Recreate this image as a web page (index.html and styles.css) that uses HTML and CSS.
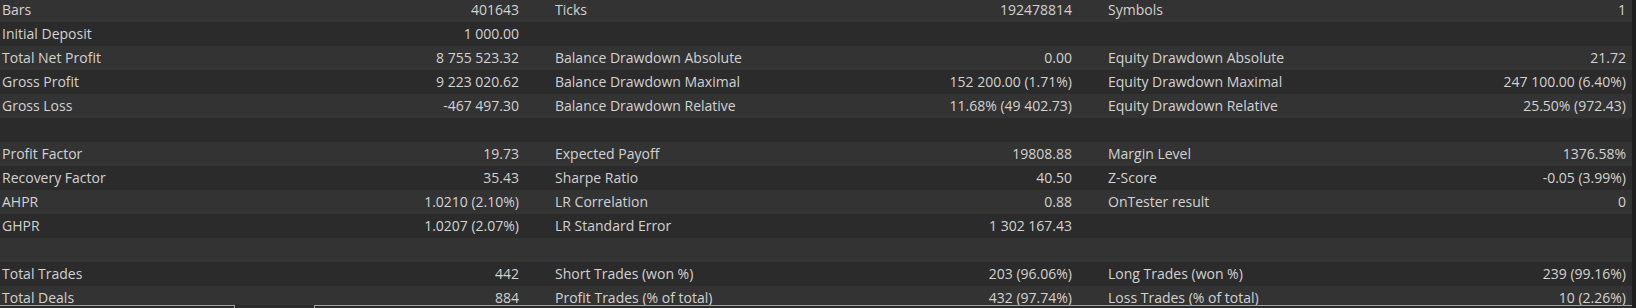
FILE: index.html
```html
<!DOCTYPE html>
<html>
<head>
<meta charset="utf-8">
<link rel="stylesheet" href="styles.css">
</head>
<body>
<div class="window">
  <div class="main">
    <div class="panel">
      <div class="report">
        <div class="row"><div class="cell"><span>Bars</span><span>401643</span></div><div class="cell"><span>Ticks</span><span>192478814</span></div><div class="cell"><span>Symbols</span><span>1</span></div></div>
        <div class="row"><div class="cell"><span>Initial Deposit</span><span>1 000.00</span></div><div class="cell"></div><div class="cell"></div></div>
        <div class="row"><div class="cell"><span>Total Net Profit</span><span>8 755 523.32</span></div><div class="cell"><span>Balance Drawdown Absolute</span><span>0.00</span></div><div class="cell"><span>Equity Drawdown Absolute</span><span>21.72</span></div></div>
        <div class="row"><div class="cell"><span>Gross Profit</span><span>9 223 020.62</span></div><div class="cell"><span>Balance Drawdown Maximal</span><span>152 200.00 (1.71%)</span></div><div class="cell"><span>Equity Drawdown Maximal</span><span>247 100.00 (6.40%)</span></div></div>
        <div class="row"><div class="cell"><span>Gross Loss</span><span>-467 497.30</span></div><div class="cell"><span>Balance Drawdown Relative</span><span>11.68% (49 402.73)</span></div><div class="cell"><span>Equity Drawdown Relative</span><span>25.50% (972.43)</span></div></div>
        <div class="row"><div class="cell"></div><div class="cell"></div><div class="cell"></div></div>
        <div class="row"><div class="cell"><span>Profit Factor</span><span>19.73</span></div><div class="cell"><span>Expected Payoff</span><span>19808.88</span></div><div class="cell"><span>Margin Level</span><span>1376.58%</span></div></div>
        <div class="row"><div class="cell"><span>Recovery Factor</span><span>35.43</span></div><div class="cell"><span>Sharpe Ratio</span><span>40.50</span></div><div class="cell"><span>Z-Score</span><span>-0.05 (3.99%)</span></div></div>
        <div class="row"><div class="cell"><span>AHPR</span><span>1.0210 (2.10%)</span></div><div class="cell"><span>LR Correlation</span><span>0.88</span></div><div class="cell"><span>OnTester result</span><span>0</span></div></div>
        <div class="row"><div class="cell"><span>GHPR</span><span>1.0207 (2.07%)</span></div><div class="cell"><span>LR Standard Error</span><span>1 302 167.43</span></div><div class="cell"></div></div>
        <div class="row"><div class="cell"></div><div class="cell"></div><div class="cell"></div></div>
        <div class="row"><div class="cell"><span>Total Trades</span><span>442</span></div><div class="cell"><span>Short Trades (won %)</span><span>203 (96.06%)</span></div><div class="cell"><span>Long Trades (won %)</span><span>239 (99.16%)</span></div></div>
        <div class="row"><div class="cell"><span>Total Deals</span><span>884</span></div><div class="cell"><span>Profit Trades (% of total)</span><span>432 (97.74%)</span></div><div class="cell"><span>Loss Trades (% of total)</span><span>10 (2.26%)</span></div></div>
      </div>
    </div>
    <div class="tabbar">
      <div class="tabline first"></div>
      <div class="tab"></div>
      <div class="tabline rest"></div>
    </div>
  </div>
  <div class="edge"></div>
</div>
</body>
</html>
```

FILE: styles.css
```css
html, body {
  margin: 0;
  padding: 0;
  background: #2b2b2b;
}

body {
  font-family: "Open Sans", "Noto Sans", "Liberation Sans", sans-serif;
  font-size: 14px;
  color: #d2d2d2;
}

.window {
  display: flex;
  width: 1636px;
  height: 308px;
  overflow: hidden;
}

.main {
  width: 1632px;
  display: flex;
  flex-direction: column;
}

.edge {
  width: 4px;
  background: #1e1e1e;
}

.panel {
  height: 305px;
  overflow: hidden;
}

.report {
  margin-top: -2px;
}

.row {
  display: grid;
  grid-template-columns: 553px 553px 526px;
  height: 24px;
  line-height: 24px;
  background: #333333;
}

.row:nth-child(even) {
  background: #2b2b2b;
}

.cell {
  display: flex;
  justify-content: space-between;
  padding: 0 34px 0 2px;
  white-space: nowrap;
}

.cell:last-child {
  padding-right: 6px;
}

.tabbar {
  display: flex;
  height: 3px;
  background: #2b2b2b;
}

.tabline {
  border-top: 1px solid #a0a0a0;
}

.tabline.first {
  width: 234px;
}

.tabline.rest {
  flex: 1;
}

.tab {
  width: 79px;
  border-left: 1px solid #a0a0a0;
  border-right: 1px solid #a0a0a0;
}
```
